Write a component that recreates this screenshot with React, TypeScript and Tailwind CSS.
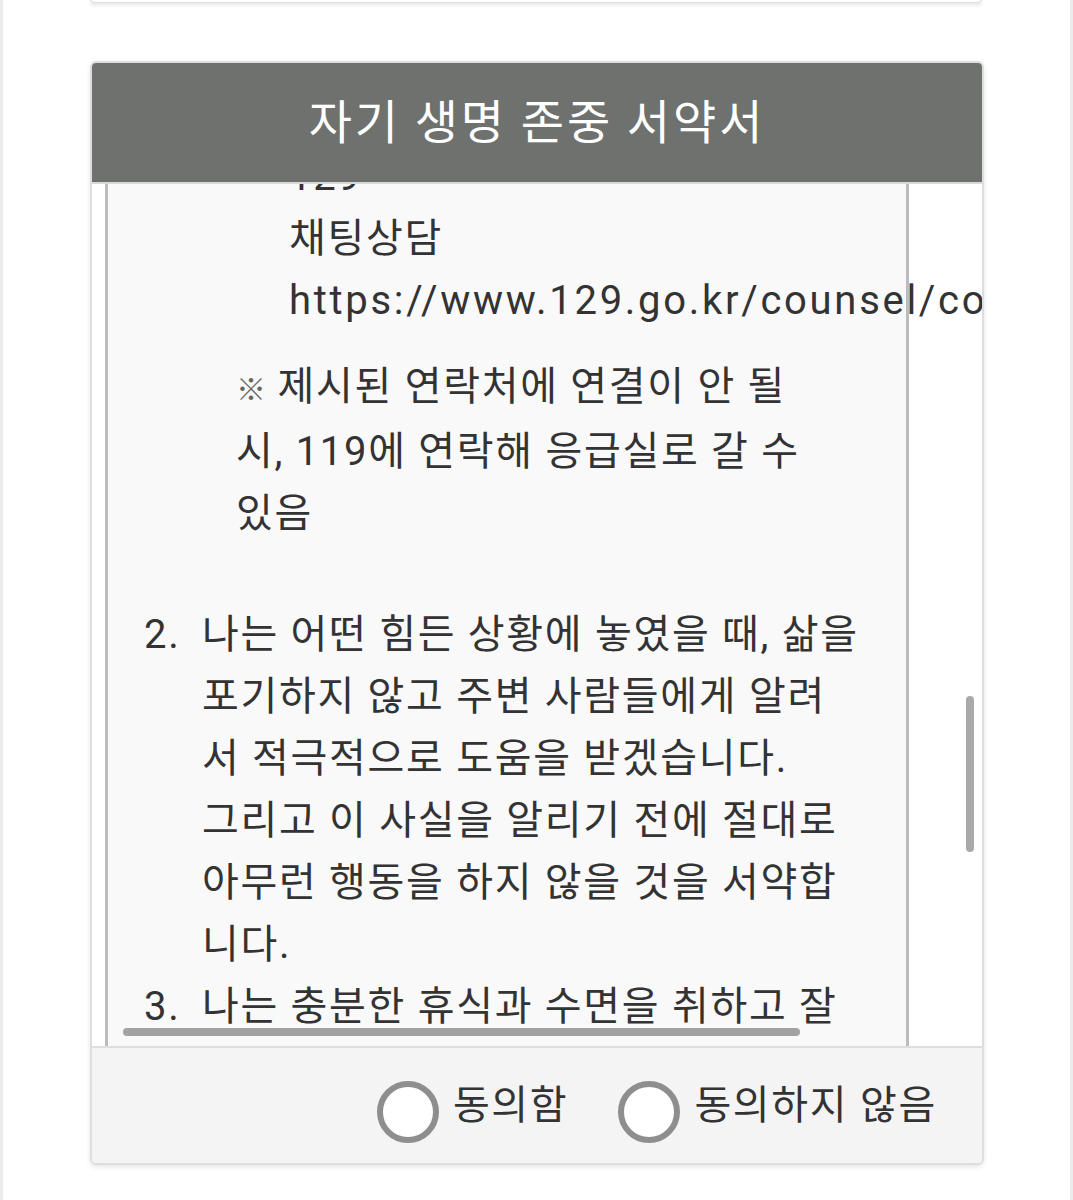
const lines2 = [
  "나는 어떤 힘든 상황에 놓였을 때, 삶을",
  "포기하지 않고 주변 사람들에게 알려",
  "서 적극적으로 도움을 받겠습니다.",
  "그리고 이 사실을 알리기 전에 절대로",
  "아무런 행동을 하지 않을 것을 서약합",
  "니다.",
];

function Radio({ label }: { label: string }) {
  return (
    <label className="flex items-center gap-[14px]">
      <span className="block w-[62px] h-[62px] rounded-full border-[6px] border-[#8e8e8e] bg-white mt-[12px]" />
      <span className="text-[40px] tracking-[1.7px] text-[#333]">{label}</span>
    </label>
  );
}

export default function App() {
  return (
    <div
      className="min-h-[1200px] bg-white border-x-[3px] border-[#ececec] relative overflow-hidden"
      style={{ fontFamily: "Roboto, 'Noto Sans CJK KR', sans-serif" }}
    >
      {/* previous card, only its bottom edge is visible */}
      <div className="ml-[87px] w-[892px] h-[4px] -mt-[1px] rounded-b-md border border-t-0 border-[#dcdcdc] bg-white shadow-[0_2px_4px_rgba(0,0,0,0.12)]" />

      <div className="ml-[87px] mt-[58px] w-[894px] rounded-md border-2 border-[#dedede] shadow-[0_2px_5px_rgba(0,0,0,0.1)] overflow-hidden">
        <div className="h-[121px] bg-[#6e716e] flex items-center justify-center border-b-2 border-[#d9d9d9]">
          <h1 className="text-[47px] tracking-[3px] text-white font-normal -mt-[6px]" style={{ fontFamily: "'Noto Sans CJK KR', sans-serif" }}>
            자기 생명 존중 서약서
          </h1>
        </div>

        <div className="relative h-[862px] overflow-hidden bg-white">
          <div className="flow-root ml-[13px] w-[804px] h-full border-x-[3px] border-[#bcbcbc] bg-[#f9f9f9] text-[40px] tracking-[1.7px] leading-[62px] text-[#333] whitespace-nowrap">
            <div className="-mt-[38px] pl-[181px]">
              <div>129</div>
              <div>채팅상담</div>
              <div className="tracking-[2.7px]">https://www.129.go.kr/counsel/counsel.do</div>
            </div>
            <div className="mt-[24px] pl-[128px]">
              <div>
                <span className="text-[#666] text-[30px] tracking-normal">※</span> 제시된 연락처에 연결이 안 될
              </div>
              <div>시, 119에 연락해 응급실로 갈 수</div>
              <div>있음</div>
            </div>
            <div className="mt-[59px] pl-[36px] flex">
              <div className="w-[58px]">2.</div>
              <div>
                {lines2.map((l) => (
                  <div key={l}>{l}</div>
                ))}
              </div>
            </div>
            <div className="pl-[36px] flex">
              <div className="w-[58px]">3.</div>
              <div>나는 충분한 휴식과 수면을 취하고 잘</div>
            </div>
          </div>

          {/* overlay scrollbars */}
          <div className="absolute left-[874px] top-[512px] w-[8px] h-[156px] rounded-full bg-[#a9a9a9]" />
          <div className="absolute left-[31px] top-[844px] w-[677px] h-[8px] rounded-full bg-[#a2a2a2]" />
        </div>

        <div className="h-[117px] bg-[#f4f4f4] border-t-2 border-[#dedede] flex items-center justify-end gap-[50px] pr-[45px]">
          <Radio label="동의함" />
          <Radio label="동의하지 않음" />
        </div>
      </div>
    </div>
  );
}
